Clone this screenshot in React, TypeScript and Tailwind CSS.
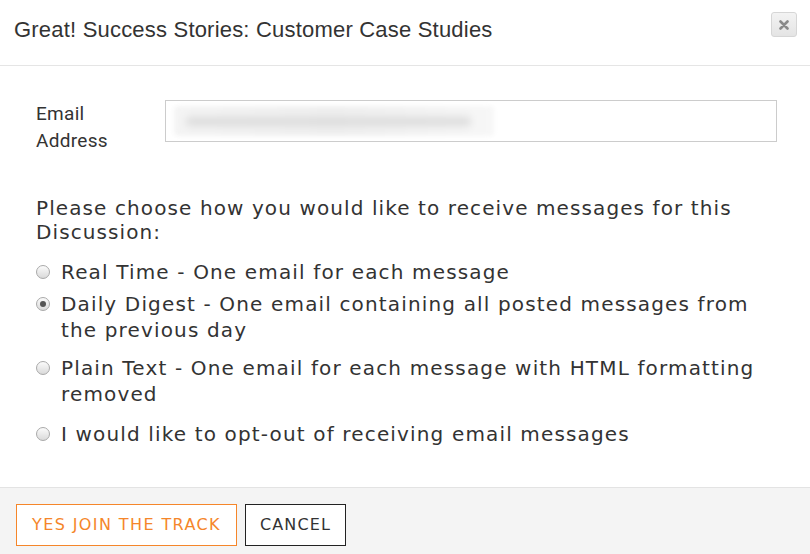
import React from "react";

const options = [
  { id: "rt", lines: "Real Time - One email for each message", checked: false, cls: "mt-0" },
  {
    id: "dd",
    lines: "Daily Digest - One email containing all posted messages from the previous day",
    checked: true,
    cls: "mt-[6px]",
  },
  {
    id: "pt",
    lines: "Plain Text - One email for each message with HTML formatting removed",
    checked: false,
    cls: "mt-[12px]",
  },
  { id: "oo", lines: "I would like to opt-out of receiving email messages", checked: false, cls: "mt-[14px]" },
];

const Radio = ({ checked }: { checked: boolean }) => (
  <span className="mt-[6px] flex h-[14px] w-[14px] shrink-0 items-center justify-center rounded-full border border-[#a9a9a9] bg-gradient-to-b from-[#fbfbfb] to-[#dadada]">
    {checked && <span className="h-[6px] w-[6px] rounded-full bg-[#555]" />}
  </span>
);

export default function App() {
  return (
    <div className="h-[554px] w-[810px] overflow-hidden bg-white text-[#333]">
      <div className="flex h-[66px] items-start justify-between border-b border-[#e5e5e5] pl-[14px] pr-[13px]">
        <h1 className="mt-[16px] font-['Liberation_Sans',Arial,sans-serif] text-[22px] leading-[28px] tracking-[0.2px] text-[#333]">
          Great! Success Stories: Customer Case Studies
        </h1>
        <button className="mt-[12px] flex h-[25px] w-[26px] items-center justify-center rounded-[3px] border border-[#d6d6d6] bg-gradient-to-b from-[#f3f3f3] to-[#e4e4e4]">
          <svg width="10" height="10" viewBox="0 0 10 10">
            <path d="M1.5 1.5 L8.5 8.5 M8.5 1.5 L1.5 8.5" stroke="#8a8a8a" strokeWidth="2.6" strokeLinecap="round" />
          </svg>
        </button>
      </div>

      <div className="h-[421px] pl-[36px] pr-[33px] pt-[34px] font-['DejaVu_Sans',Verdana,sans-serif]">
        <div className="flex items-start">
          <label className="w-[129px] shrink-0 font-['Roboto',sans-serif] text-[19px] leading-[27px] tracking-[0.3px] text-[#333]">
            Email
            <br />
            Address
          </label>
          <div className="flex h-[42px] flex-1 items-center border border-[#cccccc] bg-white pl-[8px]">
            <div className="h-[30px] w-[320px] rounded-sm bg-gradient-to-r from-[#f4f4f4] via-[#efefef] to-[#f7f7f7] blur-[2px]">
              <div className="ml-[12px] mt-[11px] h-[9px] w-[285px] rounded-full bg-[#dcdcdc] blur-[3px]" />
            </div>
          </div>
        </div>

        <p className="mt-[42px] text-[20px] leading-[24px] tracking-[1.1px]">
          Please choose how you would like to receive messages for this Discussion:
        </p>

        <div className="mt-[15px] flex flex-col">
          {options.map((o) => (
            <div key={o.id} className={`flex items-start gap-[11px] ${o.cls}`}>
              <Radio checked={o.checked} />
              <span className="text-[20px] leading-[26px] tracking-[1.15px]">{o.lines}</span>
            </div>
          ))}
        </div>
      </div>

      <div className="flex h-[67px] items-start gap-[8px] border-t border-[#e3e3e3] bg-[#f4f4f4] pl-[16px] pt-[16px] font-['DejaVu_Sans',Verdana,sans-serif]">
        <button className="h-[42px] w-[221px] border border-[#f5862a] bg-white text-[16px] tracking-[1.4px] text-[#f5862a]">
          YES JOIN THE TRACK
        </button>
        <button className="h-[42px] w-[101px] border border-[#222] bg-white text-[16px] tracking-[1.1px] text-[#333]">
          CANCEL
        </button>
      </div>
    </div>
  );
}
